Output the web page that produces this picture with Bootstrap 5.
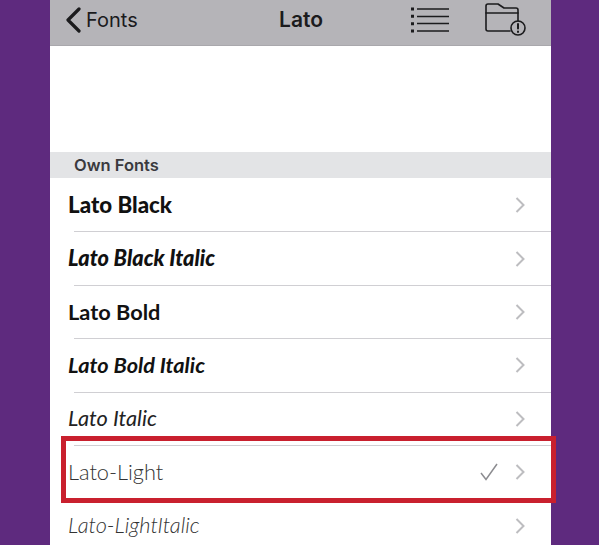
<!DOCTYPE html>
<html lang="en">
<head>
  <title>Lato</title>
  <meta charset="UTF-8" />
  <meta name="viewport" content="width=device-width, initial-scale=1.0" />
  <link href="https://cdn.jsdelivr.net/npm/bootstrap@5.3.7/dist/css/bootstrap.min.css" rel="stylesheet">
  <style>
    html, body { height: 100%; }
    body {
      background: #5e2a7e;
      overflow: hidden;
      font-family: Lato, sans-serif;
    }
    .phone {
      width: 501px;
      height: 545px;
      margin-left: 50px;
      background: #fff;
      overflow: hidden;
    }
    .top-bar {
      height: 46px;
      background: #b5b4b8;
      border-bottom: 1px solid #a9a8ac;
      color: #1b1b1d;
      padding-left: 15px;
      font-family: Inter, sans-serif;
      font-size: 20px;
    }
    .back-link { width: 150px; flex-shrink: 0; gap: 5px; margin-top: -6px; }
    .bar-title {
      width: 172px;
      flex-shrink: 0;
      text-align: center;
      font-size: 21px;
      font-weight: 600;
      margin-top: -6px;
    }
    .bar-icons { gap: 33px; margin-top: -6px; margin-left: 23px; flex-shrink: 0; }
    .blank-area { height: 106px; }
    .section-head {
      height: 26px;
      background: #e3e4e6;
      padding-left: 24px;
      font-family: Inter, sans-serif;
      font-size: 16.5px;
      font-weight: 600;
      color: #3a3a3e;
      line-height: 27px;
    }
    .font-row {
      height: 53.4px;
      padding-left: 18px;
      padding-right: 26px;
      padding-top: 1px;
      position: relative;
      font-size: 21.75px;
      color: #111;
    }
    .font-row + .font-row::before {
      content: "";
      position: absolute;
      top: 0;
      left: 24px;
      right: 0;
      border-top: 1px solid #d0cfd3;
    }
    .w-black { font-weight: 900; }
    .w-bold { font-weight: 700; }
    .w-light { font-weight: 300; color: #333; }
    .w-italic { font-style: italic; }
    .w-wide { font-size: 22.3px; }
    .w-soft { color: #222; }
    .red-box {
      position: absolute;
      left: 61px;
      top: 436px;
      width: 495px;
      height: 67px;
      border: 5px solid #c9202e;
      pointer-events: none;
    }
  </style>
</head>
<body class="position-relative">
  <div class="phone">
    <div class="top-bar d-flex align-items-center">
      <div class="back-link d-flex align-items-center">
        <svg width="16" height="26" viewBox="0 0 16 26" fill="none" stroke="#1b1b1d" stroke-width="3.200" stroke-linecap="round" stroke-linejoin="round"><path d="M14 2 3 13l11 11"/></svg>
        <span>Fonts</span>
      </div>
      <div class="bar-title">Lato</div>
      <div class="bar-icons d-flex align-items-center">
        <svg width="42" height="26" viewBox="0 0 42 26" fill="none" stroke="#1b1b1d" stroke-width="1.600"><path d="M7 2h32M7 9.500h32M7 16.500h32M7 24h32"/><path stroke-width="3" stroke-dasharray="3 4.330" d="M2.500 .5V26"/></svg>
        <svg width="44" height="34" viewBox="0 0 44 34" fill="none" stroke="#1b1b1d" stroke-width="1.600" stroke-linejoin="round" stroke-linecap="round"><path d="M25 28H3a2 2 0 0 1-2-2V3a2 2 0 0 1 2-2h10l6 4h12a2 2 0 0 1 2 2v11"/><path d="M1 10h32"/><circle cx="33" cy="25" r="7"/><path stroke-width="2" d="M33 21v4.500M33 28.500v.5"/></svg>
      </div>
    </div>
    <div class="blank-area"></div>
    <div class="section-head">Own Fonts</div>
    <div class="font-row d-flex align-items-center w-black w-wide"><span class="flex-grow-1">Lato Black</span><svg width="10" height="16" viewBox="0 0 10 16" fill="none" stroke="#bdbdc0" stroke-width="2"><path d="m1.500 1 7 7-7 7"/></svg></div>
    <div class="font-row d-flex align-items-center w-black w-italic"><span class="flex-grow-1">Lato Black Italic</span><svg width="10" height="16" viewBox="0 0 10 16" fill="none" stroke="#bdbdc0" stroke-width="2"><path d="m1.500 1 7 7-7 7"/></svg></div>
    <div class="font-row d-flex align-items-center w-bold"><span class="flex-grow-1">Lato Bold</span><svg width="10" height="16" viewBox="0 0 10 16" fill="none" stroke="#bdbdc0" stroke-width="2"><path d="m1.500 1 7 7-7 7"/></svg></div>
    <div class="font-row d-flex align-items-center w-bold w-italic"><span class="flex-grow-1">Lato Bold Italic</span><svg width="10" height="16" viewBox="0 0 10 16" fill="none" stroke="#bdbdc0" stroke-width="2"><path d="m1.500 1 7 7-7 7"/></svg></div>
    <div class="font-row d-flex align-items-center w-italic w-soft"><span class="flex-grow-1">Lato Italic</span><svg width="10" height="16" viewBox="0 0 10 16" fill="none" stroke="#bdbdc0" stroke-width="2"><path d="m1.500 1 7 7-7 7"/></svg></div>
    <div class="font-row d-flex align-items-center w-light"><span class="flex-grow-1">Lato-Light</span><svg class="me-3" width="20" height="18" viewBox="0 0 20 18" fill="none" stroke="#8c8c90" stroke-width="1.500"><path d="m2 10 5 6.500L18 1"/></svg><svg width="10" height="16" viewBox="0 0 10 16" fill="none" stroke="#bdbdc0" stroke-width="2"><path d="m1.500 1 7 7-7 7"/></svg></div>
    <div class="font-row d-flex align-items-center w-light w-italic"><span class="flex-grow-1">Lato-LightItalic</span><svg width="10" height="16" viewBox="0 0 10 16" fill="none" stroke="#bdbdc0" stroke-width="2"><path d="m1.500 1 7 7-7 7"/></svg></div>
  </div>
  <div class="red-box"></div>
  <script src="https://cdn.jsdelivr.net/npm/bootstrap@5.3.7/dist/js/bootstrap.bundle.min.js"></script>
</body>
</html>
